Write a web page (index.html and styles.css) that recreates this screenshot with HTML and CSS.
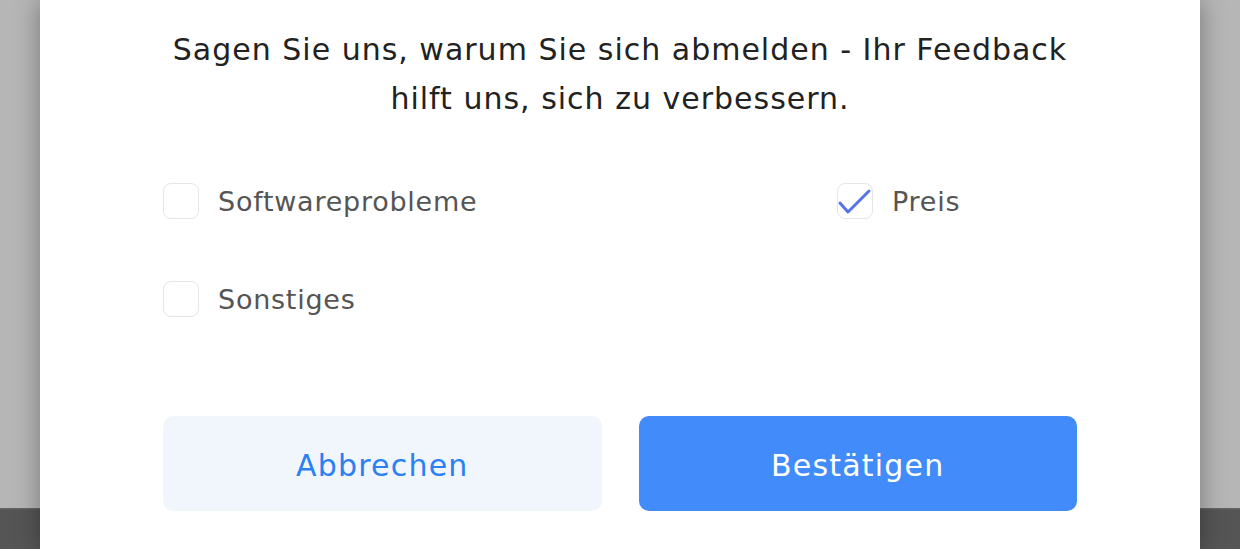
FILE: index.html
```html
<!DOCTYPE html>
<html>
<head>
    <meta charset="UTF-8">
    <title>Abmelden</title>
    <link rel="stylesheet" href="styles.css">
</head>
<body>
    <div class="overlay">
        <div class="modal">
            <p class="pregunta">Sagen Sie uns, warum Sie sich abmelden - Ihr Feedback hilft uns, sich zu verbessern.</p>

            <div class="opciones">
                <label class="opcion">
                    <span class="caja"></span>
                    <span class="texto">Softwareprobleme</span>
                </label>
                <label class="opcion">
                    <span class="caja marcada">
                        <svg viewBox="0 0 36 36" width="36" height="36">
                            <path d="M3 20 L11 29 L32 8" fill="none" stroke="#5573ea" stroke-width="3" stroke-linecap="round" stroke-linejoin="round"/>
                        </svg>
                    </span>
                    <span class="texto">Preis</span>
                </label>
                <label class="opcion">
                    <span class="caja"></span>
                    <span class="texto">Sonstiges</span>
                </label>
            </div>

            <div class="botones">
                <button class="btn cancelar">Abbrechen</button>
                <button class="btn confirmar">Bestätigen</button>
            </div>
        </div>
    </div>
</body>
</html>
```

FILE: styles.css
```css
html, body {
    margin: 0;
    height: 100%;
}

body {
    font-family: "DejaVu Sans", "Open Sans", sans-serif;
    background:
        linear-gradient(to bottom, transparent 508px, #6a6a6a 508px, #555555 510px),
        #b6b6b6;
    overflow: hidden;
}

.overlay {
    display: flex;
    justify-content: center;
    height: 549px;
}

.modal {
    width: 1160px;
    background-color: #ffffff;
    box-shadow: 0px 0px 24px 0px rgba(0,0,0,0.35);
    padding: 25px 123px 0 123px;
    box-sizing: border-box;
}

.pregunta {
    margin: 0;
    font-size: 30px;
    letter-spacing: 1px;
    line-height: 49px;
    color: #222222;
    text-align: center;
}

.opciones {
    display: grid;
    grid-template-columns: 674px auto;
    row-gap: 62px;
    margin-top: 60px;
}

.opcion {
    display: flex;
    align-items: center;
    height: 36px;
}

.caja {
    width: 36px;
    height: 36px;
    box-sizing: border-box;
    border: 1.5px solid #e6e6e6;
    border-radius: 8px;
    margin-right: 19px;
    flex-shrink: 0;
}

.caja svg {
    display: block;
    margin: -1.5px;
}

.texto {
    font-size: 27px;
    letter-spacing: 0.75px;
    color: #555555;
}

.botones {
    display: flex;
    gap: 37px;
    margin-top: 99px;
}

.btn {
    flex: 1;
    height: 95px;
    padding: 4px 0 0 0;
    border: none;
    border-radius: 10px;
    font-family: inherit;
    font-size: 30px;
    letter-spacing: 1.2px;
    cursor: pointer;
}

.cancelar {
    background-color: #f1f6fd;
    color: #2b80f2;
}

.confirmar {
    background-color: #428bfa;
    color: #ffffff;
}
```
